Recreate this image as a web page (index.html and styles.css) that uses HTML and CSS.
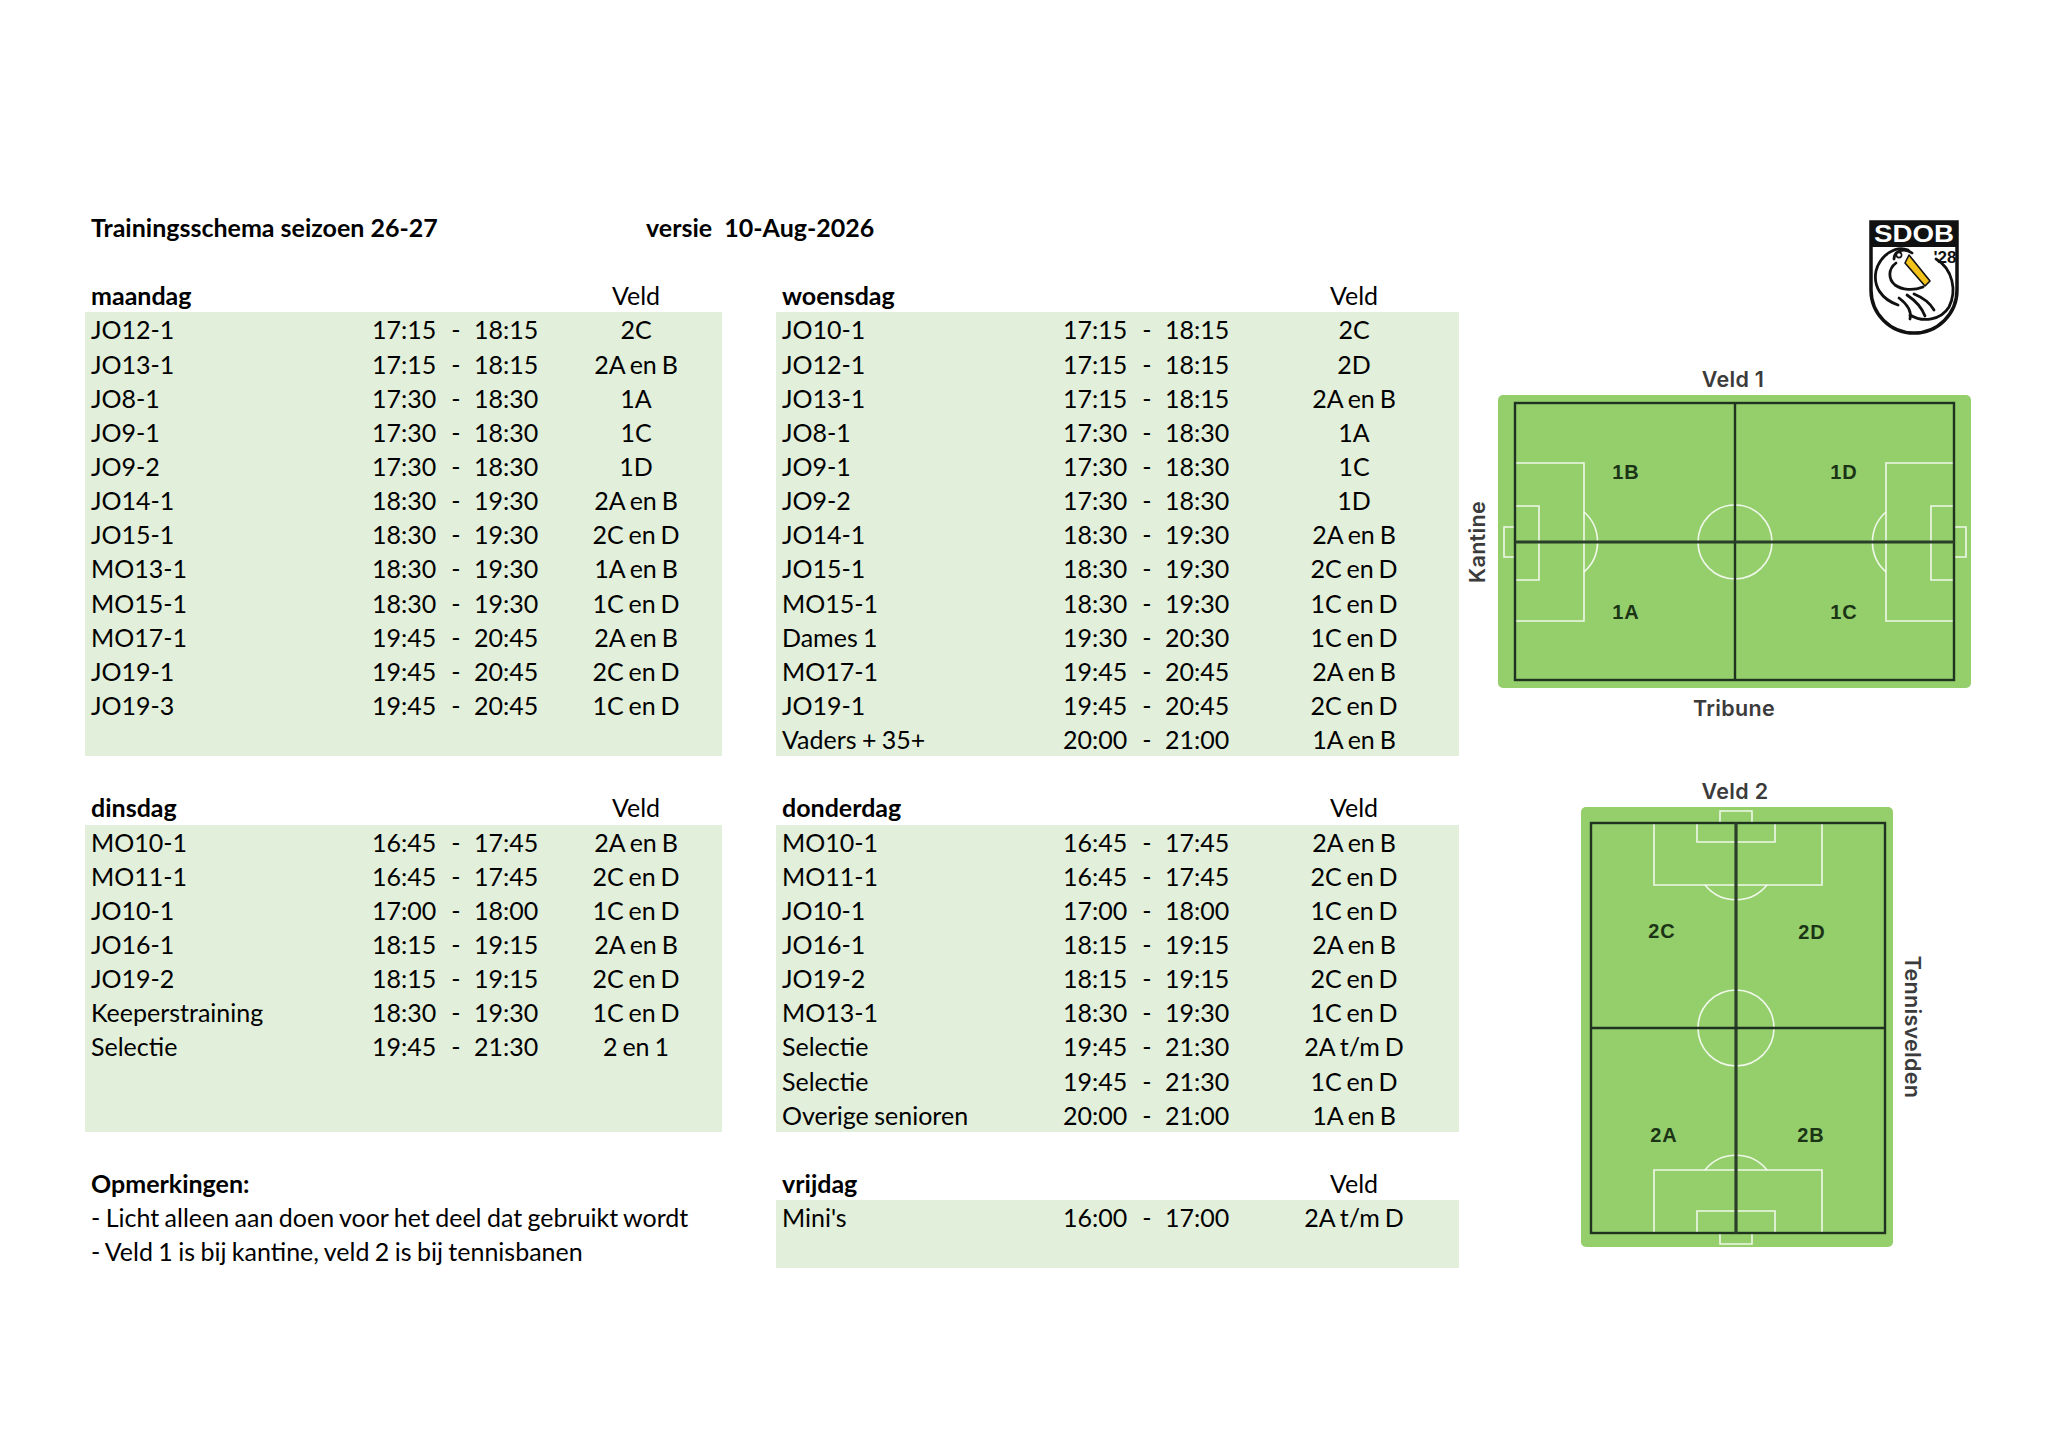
FILE: index.html
```html
<!DOCTYPE html>
<html lang="nl">
<head>
<meta charset="utf-8">
<title>Trainingsschema seizoen 26-27</title>
<link rel="stylesheet" href="styles.css">
</head>
<body>
<div class="sheet">
  <main class="schedule">
    <div class="titlebar">
      <span class="title">Trainingsschema seizoen 26-27</span>
      <span class="version">versie&nbsp;&nbsp;10-Aug-2026</span>
    </div>
    <div class="blank"></div>

    <div class="pair">
      <section class="day narrow">
        <div class="row hdr"><span class="name">maandag</span><span></span><span class="veld">Veld</span></div>
        <div class="body">
          <div class="row"><span class="name">JO12-1</span><span class="time"><span class="t">17:15</span><span class="dash">-</span><span class="t">18:15</span></span><span class="veld">2C</span></div>
          <div class="row"><span class="name">JO13-1</span><span class="time"><span class="t">17:15</span><span class="dash">-</span><span class="t">18:15</span></span><span class="veld">2A en B</span></div>
          <div class="row"><span class="name">JO8-1</span><span class="time"><span class="t">17:30</span><span class="dash">-</span><span class="t">18:30</span></span><span class="veld">1A</span></div>
          <div class="row"><span class="name">JO9-1</span><span class="time"><span class="t">17:30</span><span class="dash">-</span><span class="t">18:30</span></span><span class="veld">1C</span></div>
          <div class="row"><span class="name">JO9-2</span><span class="time"><span class="t">17:30</span><span class="dash">-</span><span class="t">18:30</span></span><span class="veld">1D</span></div>
          <div class="row"><span class="name">JO14-1</span><span class="time"><span class="t">18:30</span><span class="dash">-</span><span class="t">19:30</span></span><span class="veld">2A en B</span></div>
          <div class="row"><span class="name">JO15-1</span><span class="time"><span class="t">18:30</span><span class="dash">-</span><span class="t">19:30</span></span><span class="veld">2C en D</span></div>
          <div class="row"><span class="name">MO13-1</span><span class="time"><span class="t">18:30</span><span class="dash">-</span><span class="t">19:30</span></span><span class="veld">1A en B</span></div>
          <div class="row"><span class="name">MO15-1</span><span class="time"><span class="t">18:30</span><span class="dash">-</span><span class="t">19:30</span></span><span class="veld">1C en D</span></div>
          <div class="row"><span class="name">MO17-1</span><span class="time"><span class="t">19:45</span><span class="dash">-</span><span class="t">20:45</span></span><span class="veld">2A en B</span></div>
          <div class="row"><span class="name">JO19-1</span><span class="time"><span class="t">19:45</span><span class="dash">-</span><span class="t">20:45</span></span><span class="veld">2C en D</span></div>
          <div class="row"><span class="name">JO19-3</span><span class="time"><span class="t">19:45</span><span class="dash">-</span><span class="t">20:45</span></span><span class="veld">1C en D</span></div>
          <div class="row"></div>
        </div>
      </section>

      <section class="day wide">
        <div class="row hdr"><span class="name">woensdag</span><span></span><span class="veld">Veld</span></div>
        <div class="body">
          <div class="row"><span class="name">JO10-1</span><span class="time"><span class="t">17:15</span><span class="dash">-</span><span class="t">18:15</span></span><span class="veld">2C</span></div>
          <div class="row"><span class="name">JO12-1</span><span class="time"><span class="t">17:15</span><span class="dash">-</span><span class="t">18:15</span></span><span class="veld">2D</span></div>
          <div class="row"><span class="name">JO13-1</span><span class="time"><span class="t">17:15</span><span class="dash">-</span><span class="t">18:15</span></span><span class="veld">2A en B</span></div>
          <div class="row"><span class="name">JO8-1</span><span class="time"><span class="t">17:30</span><span class="dash">-</span><span class="t">18:30</span></span><span class="veld">1A</span></div>
          <div class="row"><span class="name">JO9-1</span><span class="time"><span class="t">17:30</span><span class="dash">-</span><span class="t">18:30</span></span><span class="veld">1C</span></div>
          <div class="row"><span class="name">JO9-2</span><span class="time"><span class="t">17:30</span><span class="dash">-</span><span class="t">18:30</span></span><span class="veld">1D</span></div>
          <div class="row"><span class="name">JO14-1</span><span class="time"><span class="t">18:30</span><span class="dash">-</span><span class="t">19:30</span></span><span class="veld">2A en B</span></div>
          <div class="row"><span class="name">JO15-1</span><span class="time"><span class="t">18:30</span><span class="dash">-</span><span class="t">19:30</span></span><span class="veld">2C en D</span></div>
          <div class="row"><span class="name">MO15-1</span><span class="time"><span class="t">18:30</span><span class="dash">-</span><span class="t">19:30</span></span><span class="veld">1C en D</span></div>
          <div class="row"><span class="name">Dames 1</span><span class="time"><span class="t">19:30</span><span class="dash">-</span><span class="t">20:30</span></span><span class="veld">1C en D</span></div>
          <div class="row"><span class="name">MO17-1</span><span class="time"><span class="t">19:45</span><span class="dash">-</span><span class="t">20:45</span></span><span class="veld">2A en B</span></div>
          <div class="row"><span class="name">JO19-1</span><span class="time"><span class="t">19:45</span><span class="dash">-</span><span class="t">20:45</span></span><span class="veld">2C en D</span></div>
          <div class="row"><span class="name">Vaders + 35+</span><span class="time"><span class="t">20:00</span><span class="dash">-</span><span class="t">21:00</span></span><span class="veld">1A en B</span></div>
        </div>
      </section>
    </div>

    <div class="blank"></div>

    <div class="pair">
      <section class="day narrow">
        <div class="row hdr"><span class="name">dinsdag</span><span></span><span class="veld">Veld</span></div>
        <div class="body">
          <div class="row"><span class="name">MO10-1</span><span class="time"><span class="t">16:45</span><span class="dash">-</span><span class="t">17:45</span></span><span class="veld">2A en B</span></div>
          <div class="row"><span class="name">MO11-1</span><span class="time"><span class="t">16:45</span><span class="dash">-</span><span class="t">17:45</span></span><span class="veld">2C en D</span></div>
          <div class="row"><span class="name">JO10-1</span><span class="time"><span class="t">17:00</span><span class="dash">-</span><span class="t">18:00</span></span><span class="veld">1C en D</span></div>
          <div class="row"><span class="name">JO16-1</span><span class="time"><span class="t">18:15</span><span class="dash">-</span><span class="t">19:15</span></span><span class="veld">2A en B</span></div>
          <div class="row"><span class="name">JO19-2</span><span class="time"><span class="t">18:15</span><span class="dash">-</span><span class="t">19:15</span></span><span class="veld">2C en D</span></div>
          <div class="row"><span class="name">Keeperstraining</span><span class="time"><span class="t">18:30</span><span class="dash">-</span><span class="t">19:30</span></span><span class="veld">1C en D</span></div>
          <div class="row"><span class="name">Selectie</span><span class="time"><span class="t">19:45</span><span class="dash">-</span><span class="t">21:30</span></span><span class="veld">2 en 1</span></div>
          <div class="row"></div>
          <div class="row"></div>
        </div>
      </section>

      <section class="day wide">
        <div class="row hdr"><span class="name">donderdag</span><span></span><span class="veld">Veld</span></div>
        <div class="body">
          <div class="row"><span class="name">MO10-1</span><span class="time"><span class="t">16:45</span><span class="dash">-</span><span class="t">17:45</span></span><span class="veld">2A en B</span></div>
          <div class="row"><span class="name">MO11-1</span><span class="time"><span class="t">16:45</span><span class="dash">-</span><span class="t">17:45</span></span><span class="veld">2C en D</span></div>
          <div class="row"><span class="name">JO10-1</span><span class="time"><span class="t">17:00</span><span class="dash">-</span><span class="t">18:00</span></span><span class="veld">1C en D</span></div>
          <div class="row"><span class="name">JO16-1</span><span class="time"><span class="t">18:15</span><span class="dash">-</span><span class="t">19:15</span></span><span class="veld">2A en B</span></div>
          <div class="row"><span class="name">JO19-2</span><span class="time"><span class="t">18:15</span><span class="dash">-</span><span class="t">19:15</span></span><span class="veld">2C en D</span></div>
          <div class="row"><span class="name">MO13-1</span><span class="time"><span class="t">18:30</span><span class="dash">-</span><span class="t">19:30</span></span><span class="veld">1C en D</span></div>
          <div class="row"><span class="name">Selectie</span><span class="time"><span class="t">19:45</span><span class="dash">-</span><span class="t">21:30</span></span><span class="veld">2A t/m D</span></div>
          <div class="row"><span class="name">Selectie</span><span class="time"><span class="t">19:45</span><span class="dash">-</span><span class="t">21:30</span></span><span class="veld">1C en D</span></div>
          <div class="row"><span class="name">Overige senioren</span><span class="time"><span class="t">20:00</span><span class="dash">-</span><span class="t">21:00</span></span><span class="veld">1A en B</span></div>
        </div>
      </section>
    </div>

    <div class="blank"></div>

    <div class="pair">
      <section class="notes">
        <div class="row hdr"><span class="name">Opmerkingen:</span></div>
        <div class="row"><span class="name">- Licht alleen aan doen voor het deel dat gebruikt wordt</span></div>
        <div class="row"><span class="name">- Veld 1 is bij kantine, veld 2 is bij tennisbanen</span></div>
      </section>

      <section class="day wide">
        <div class="row hdr"><span class="name">vrijdag</span><span></span><span class="veld">Veld</span></div>
        <div class="body">
          <div class="row"><span class="name">Mini's</span><span class="time"><span class="t">16:00</span><span class="dash">-</span><span class="t">17:00</span></span><span class="veld">2A t/m D</span></div>
          <div class="row"></div>
        </div>
      </section>
    </div>
  </main>

  <aside class="maps">
    <svg class="logo" width="92" height="116" viewBox="0 0 92 116" aria-label="Clublogo">
      <path d="M3,3 H89 V71 A43,43 0 0 1 3,71 Z" fill="#fff" stroke="#111" stroke-width="3.5"/>
      <rect x="3" y="3" width="86" height="25" fill="#111"/>
      <text x="46" y="23" text-anchor="middle" class="logo-name" textLength="80" lengthAdjust="spacingAndGlyphs">SDOB</text>
      <text x="77" y="44" text-anchor="middle" class="logo-year">'28</text>
      <g fill="none" stroke="#111" stroke-width="2.8" stroke-linecap="round">
        <path d="M40,31 C28,26 12,36 8,52 C5,67 13,80 30,86"/>
        <path d="M28,44 C20,50 20,60 27,66 C34,71 45,72 55,68"/>
        <path d="M68,40 C85,50 89,72 81,88 C73,101 55,104 42,96"/>
        <path d="M26,40 C26,32 36,28 44,34"/>
        <path d="M31,79 C39,85 44,92 42,100"/>
        <path d="M39,76 C48,82 54,89 57,97"/>
        <path d="M46,75 C56,79 62,84 66,91"/>
      </g>
      <circle cx="31" cy="36" r="2.6" fill="#fff" stroke="#111" stroke-width="1.6"/>
      <path d="M41,36 L62,62 L57,67 L37,44 Z" fill="#f3c31c" stroke="#111" stroke-width="1.6" stroke-linejoin="round"/>
    </svg>

    <svg class="pitch pitch-one" width="520" height="360" viewBox="0 0 520 360" aria-label="Veld 1">
      <text x="274" y="19" class="map-label">Veld 1</text>
      <rect x="39" y="35" width="473" height="293" rx="5" class="grass"/>
      <g class="chalk">
        <circle cx="276" cy="182" r="37"/>
        <path d="M56,103 H125 V261 H56"/>
        <path d="M125,152 A40,40 0 0 1 125,212"/>
        <path d="M56,146 H80 V220 H56"/>
        <path d="M56,167 H45 V197 H56"/>
        <path d="M495,103 H427 V261 H495"/>
        <path d="M427,152 A40,40 0 0 0 427,212"/>
        <path d="M495,146 H472 V220 H495"/>
        <path d="M495,167 H507 V197 H495"/>
      </g>
      <g class="split">
        <rect x="56" y="43" width="439" height="277"/>
        <path d="M276,43 V320"/>
        <path d="M56,182 H495" class="thick"/>
      </g>
      <text x="167" y="112" class="zone">1B</text>
      <text x="385" y="112" class="zone">1D</text>
      <text x="167" y="252" class="zone">1A</text>
      <text x="385" y="252" class="zone">1C</text>
      <text x="275" y="348" class="map-label">Tribune</text>
      <text transform="translate(18,182) rotate(-90)" class="map-label">Kantine</text>
    </svg>

    <svg class="pitch pitch-two" width="520" height="490" viewBox="0 0 520 490" aria-label="Veld 2">
      <text x="276" y="21" class="map-label">Veld 2</text>
      <rect x="122" y="37" width="312" height="440" rx="5" class="grass"/>
      <g class="chalk">
        <circle cx="277" cy="258" r="38"/>
        <path d="M195,53 V115 H363 V53"/>
        <path d="M246,115 A40,40 0 0 0 308,115"/>
        <path d="M238,53 V72 H316 V53"/>
        <path d="M261,53 V41 H293 V53"/>
        <path d="M195,463 V400 H363 V463"/>
        <path d="M246,400 A40,40 0 0 1 308,400"/>
        <path d="M238,463 V441 H316 V463"/>
        <path d="M261,463 V474 H293 V463"/>
      </g>
      <g class="split">
        <rect x="132" y="53" width="294" height="410"/>
        <path d="M277,53 V463" class="thick"/>
        <path d="M132,258 H426"/>
      </g>
      <text x="203" y="161" class="zone">2C</text>
      <text x="353" y="162" class="zone">2D</text>
      <text x="205" y="365" class="zone">2A</text>
      <text x="352" y="365" class="zone">2B</text>
      <text transform="translate(454,257) rotate(90)" class="map-label">Tennisvelden</text>
    </svg>
  </aside>
</div>
</body>
</html>
```

FILE: styles.css
```css
:root {
  --row: 34.15px;
  --cell-bg: #e2efda;
}

* { box-sizing: border-box; }

body {
  margin: 0;
  background: #ffffff;
  color: #000000;
  font-family: Lato, "Open Sans", sans-serif;
  font-size: 25px;
}

.sheet {
  display: flex;
  align-items: flex-start;
  padding: 210px 0 0 85px;
  width: 2048px;
  min-height: 1447px;
}

.schedule {
  width: 1374px;
  flex: none;
}

.titlebar {
  display: flex;
  align-items: center;
  height: var(--row);
  font-weight: 700;
}

.title {
  width: 561px;
  padding-left: 6px;
}

.blank { height: var(--row); }

.pair {
  display: flex;
  gap: 54px;
  align-items: flex-start;
}

.day.narrow, .notes { width: 637px; }
.day.wide { width: 683px; }

.row {
  display: grid;
  grid-template-columns: 287px 178px 1fr;
  align-items: center;
  height: var(--row);
  line-height: var(--row);
  white-space: nowrap;
  word-spacing: -1px;
}

.wide .row { grid-template-columns: 287px 186px 1fr; }

.notes .row { grid-template-columns: 1fr; }

.name { padding-left: 6px; }

.hdr .name { font-weight: 700; }

.body { background: var(--cell-bg); }

.time { display: flex; }

.t { width: 66px; }

.dash {
  width: 36px;
  text-align: center;
}

.veld {
  text-align: center;
  word-spacing: -1.5px;
}

.hdr .veld { word-spacing: normal; }

/* right-hand drawings */
.maps {
  width: 520px;
  flex: none;
  padding-top: 9px;
  display: flex;
  flex-direction: column;
}

.logo {
  display: block;
  margin-left: 409px;
}

.logo-name {
  font-family: "Liberation Sans", Arial, sans-serif;
  font-weight: 700;
  font-size: 23px;
  fill: #ffffff;
}

.logo-year {
  font-family: "Liberation Sans", Arial, sans-serif;
  font-weight: 700;
  font-size: 17px;
  fill: #111111;
}

.pitch { display: block; }
.pitch-one { margin-top: 25px; }
.pitch-two { margin-top: 50px; }

.grass { fill: #94cf6c; }

.chalk {
  fill: none;
  stroke: rgba(255, 255, 255, 0.85);
  stroke-width: 1.6;
}

.split {
  fill: none;
  stroke: #1f3320;
  stroke-width: 2.4;
}

.split .thick { stroke-width: 3.2; stroke: #2a3f28; }

.zone {
  font-family: "Liberation Sans", Arial, sans-serif;
  font-weight: 700;
  font-size: 20px;
  letter-spacing: 1px;
  fill: #1c3416;
  text-anchor: middle;
  dominant-baseline: central;
}

.map-label {
  font-family: Inter, "Liberation Sans", sans-serif;
  font-weight: 600;
  font-size: 21.5px;
  letter-spacing: 0.3px;
  fill: #3b3b3b;
  text-anchor: middle;
  dominant-baseline: central;
}
```
